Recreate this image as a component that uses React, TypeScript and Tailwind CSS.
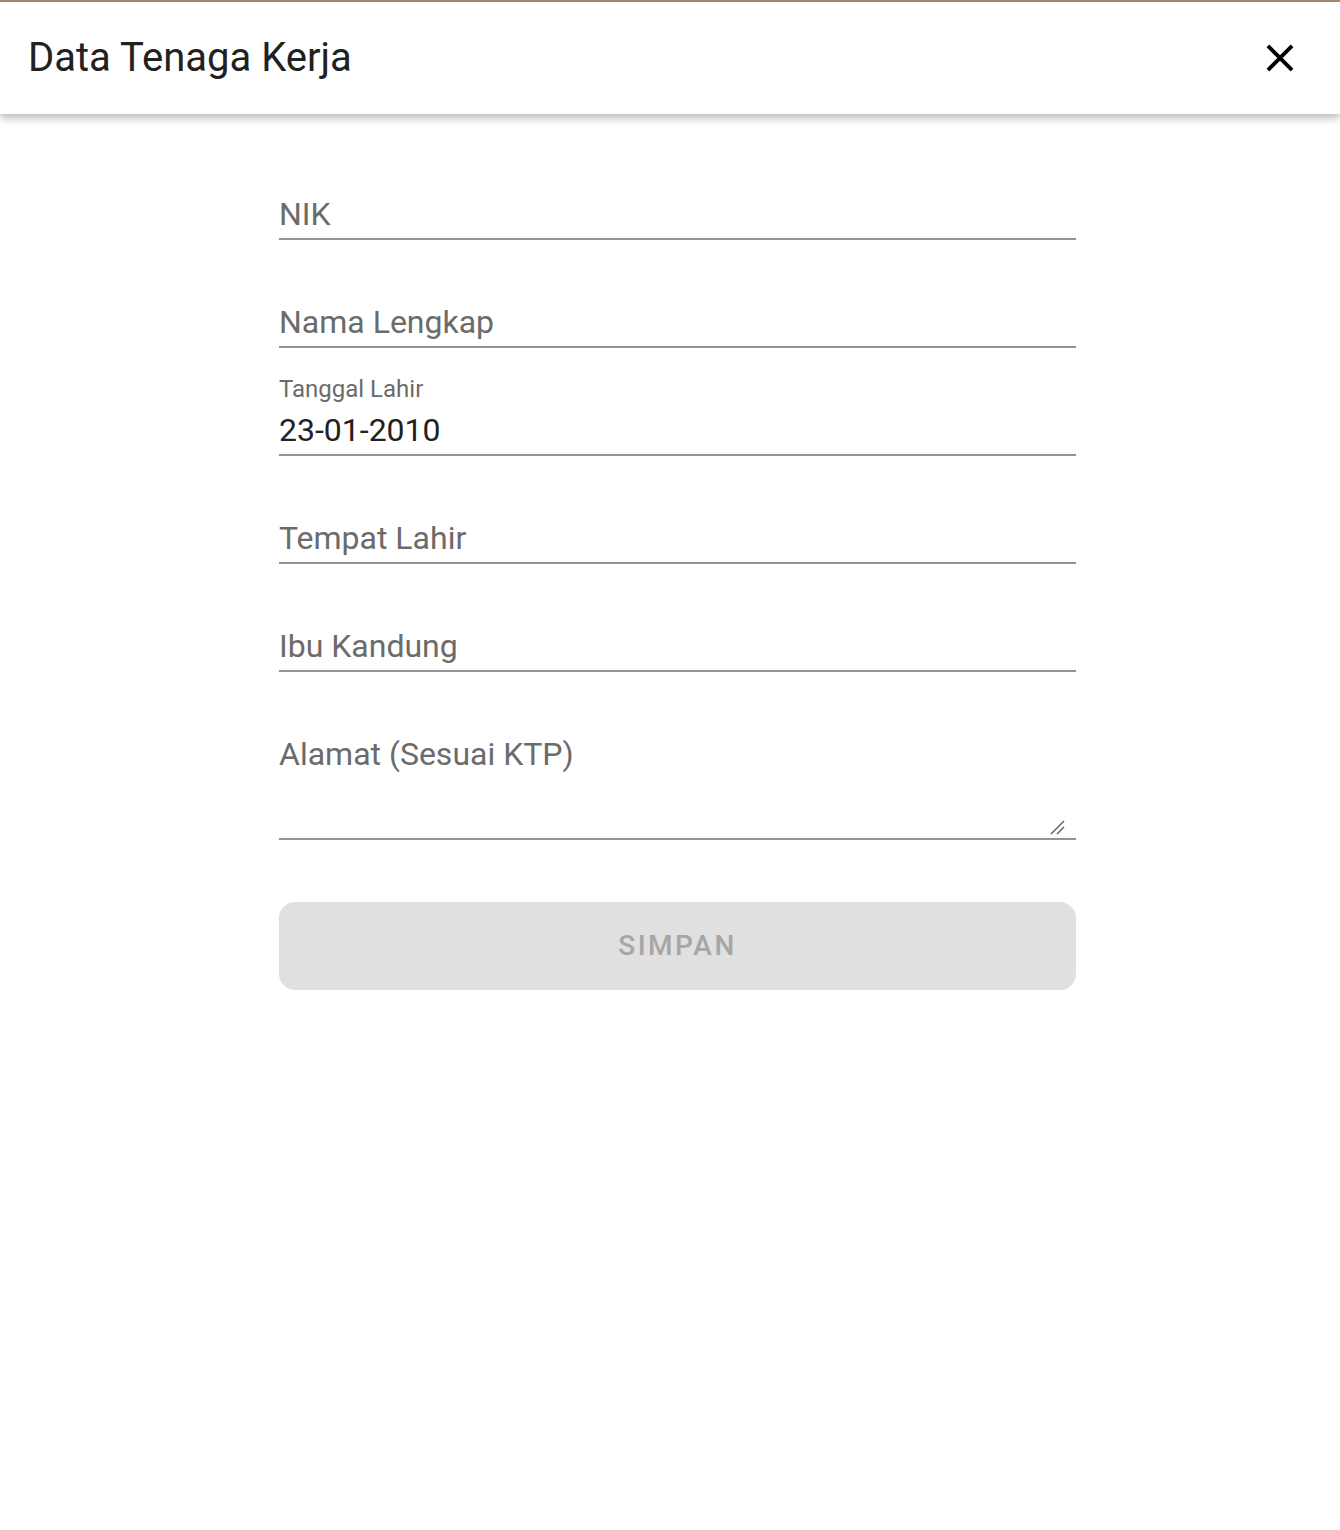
import React from "react";

const fields = [
	{ label: "NIK" },
	{ label: "Nama Lengkap" },
	{ label: "Tanggal Lahir", value: "23-01-2010" },
	{ label: "Tempat Lahir" },
	{ label: "Ibu Kandung" },
];

function Field({ label, value }: { label: string; value?: string }) {
	return (
		<div className="flex h-[108px] flex-col justify-end border-b-2 border-[#949494]">
			{value ? (
				<>
					<div className="text-[24px] leading-[28px] text-[#6b6b6b]">{label}</div>
					<div className="mt-[7px] pb-[4px] text-[32px] leading-[40px] text-[#212121]">{value}</div>
				</>
			) : (
				<div className="pb-[4px] text-[32px] leading-[40px] text-[#6b6b6b]">{label}</div>
			)}
		</div>
	);
}

export default function App() {
	return (
		<div className="min-h-[1530px] bg-white font-['Roboto',sans-serif]">
			<header className="relative z-10 flex h-[114px] items-center justify-between border-t-2 border-[#a88468] bg-white pl-[29px] pr-[37px] shadow-[0_4px_8px_rgba(0,0,0,0.28)]">
				<h1 className="-ml-px text-[40px] font-normal leading-none text-[#212121]">Data Tenaga Kerja</h1>
				<button type="button" className="flex h-[46px] w-[46px] items-center justify-center">
					<svg width="46" height="46" viewBox="0 0 24 24" aria-hidden="true">
						<path d="M19 6.41 17.59 5 12 10.59 6.41 5 5 6.41 10.59 12 5 17.59 6.41 19 12 13.41 17.59 19 19 17.59 13.41 12z" fill="#000" />
					</svg>
				</button>
			</header>
			<main className="ml-[279px] w-[797px] pt-[18px]">
				{fields.map((f) => (
					<Field key={f.label} label={f.label} value={f.value} />
				))}
				<div className="relative flex h-[168px] flex-col border-b-2 border-[#949494]">
					<div className="pt-[62px] text-[32px] leading-[40px] text-[#6b6b6b]">Alamat (Sesuai KTP)</div>
					<svg className="absolute bottom-[2px] right-[10px]" width="16" height="16" viewBox="0 0 16 16" aria-hidden="true">
						<path d="M1 14 14 1 M7 14 14 7" stroke="#666" strokeWidth="1.5" fill="none" />
					</svg>
				</div>
				<button
					type="button"
					disabled
					className="mt-[62px] flex h-[88px] w-full items-center justify-center rounded-[16px] bg-[#e0e0e0] text-[28px] font-medium tracking-[2.5px] text-[#a6a6a6]"
				>
					SIMPAN
				</button>
			</main>
		</div>
	);
}
